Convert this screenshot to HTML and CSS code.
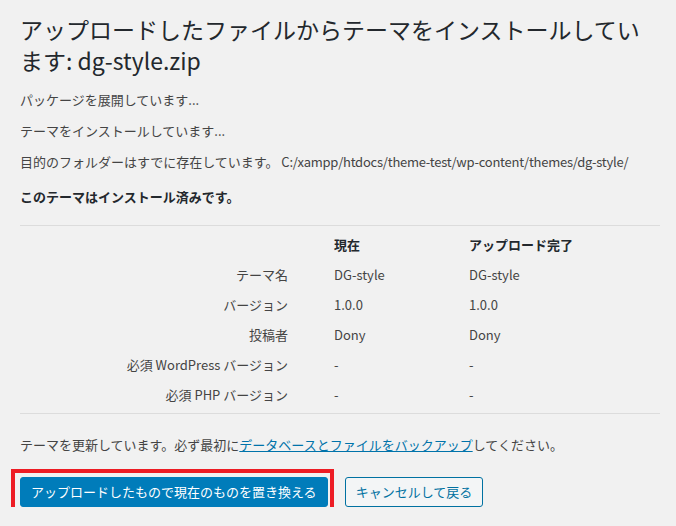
FILE: index.html
```html
<!DOCTYPE html>
<html lang="ja">
<head>
    <meta charset="utf-8">
    <title>テーマのインストール</title>
    <link rel="stylesheet" href="styles.css">
</head>
<body>
    <div class="wrap">
        <h1>アップロードしたファイルからテーマをインストールしています: dg-style.zip</h1>

        <p>パッケージを展開しています...</p>
        <p>テーマをインストールしています...</p>
        <p>目的のフォルダーはすでに存在しています。 <span class="path">C:/xampp/htdocs/theme-test/wp-content/themes/dg-style/</span></p>

        <h2 class="upload-heading">このテーマはインストール済みです。</h2>

        <div class="compare">
            <table class="compare-table">
                <thead>
                    <tr>
                        <th class="label"></th>
                        <th>現在</th>
                        <th>アップロード完了</th>
                    </tr>
                </thead>
                <tbody>
                    <tr>
                        <td class="label">テーマ名</td>
                        <td>DG-style</td>
                        <td>DG-style</td>
                    </tr>
                    <tr>
                        <td class="label">バージョン</td>
                        <td>1.0.0</td>
                        <td>1.0.0</td>
                    </tr>
                    <tr>
                        <td class="label">投稿者</td>
                        <td>Dony</td>
                        <td>Dony</td>
                    </tr>
                    <tr>
                        <td class="label">必須 WordPress バージョン</td>
                        <td>-</td>
                        <td>-</td>
                    </tr>
                    <tr>
                        <td class="label">必須 PHP バージョン</td>
                        <td>-</td>
                        <td>-</td>
                    </tr>
                </tbody>
            </table>
        </div>

        <p class="notice">テーマを更新しています。必ず最初に<a href="#">データベースとファイルをバックアップ</a>してください。</p>

        <div class="actions">
            <a href="#" class="button button-primary">アップロードしたもので現在のものを置き換える</a>
            <a href="#" class="button">キャンセルして戻る</a>
            <span class="highlight"></span>
        </div>
    </div>
</body>
</html>
```

FILE: styles.css
```css
body {
    margin: 0;
    background: #f1f1f1;
    color: #444;
    font-family: "Noto Sans CJK JP", "Noto Sans", sans-serif;
    font-size: 13px;
}

.wrap {
    padding: 14px 16px 0 20px;
}

h1 {
    margin: 0;
    padding-right: 10px;
    color: #23282d;
    font-size: 23px;
    font-weight: 400;
    line-height: 31px;
}

p {
    margin: 13px 0;
    line-height: 18px;
}

h1 + p {
    margin-top: 15px;
}

.path {
    letter-spacing: -0.25px;
}

.upload-heading {
    margin: 17px 0 19px;
    color: #23282d;
    font-size: 13px;
    font-weight: 700;
    line-height: 18px;
}

.compare {
    border-top: 1px solid #dcdcdc;
    border-bottom: 1px solid #dcdcdc;
    padding: 4px 0 3px;
}

.compare-table {
    width: 100%;
    border-collapse: collapse;
}

.compare-table th,
.compare-table td {
    height: 30px;
    padding: 0 0 0 24px;
    text-align: left;
    vertical-align: middle;
    line-height: 18px;
}

.compare-table th {
    color: #23282d;
    font-weight: 700;
}

.compare-table .label {
    width: 268px;
    padding: 0 22px 0 0;
    text-align: right;
}

.compare-table th:nth-child(2) {
    width: 111px;
}

p.notice {
    margin: 22px 0 23px;
}

a {
    color: #0073aa;
}

.actions {
    position: relative;
    display: flex;
    gap: 17px;
}

.button {
    display: inline-block;
    box-sizing: border-box;
    height: 30px;
    padding: 0 10px;
    border: 1px solid #0071a1;
    border-radius: 3px;
    background: #f3f5f6;
    color: #0071a1;
    font-size: 13px;
    line-height: 28px;
    text-decoration: none;
    white-space: nowrap;
}

.button-primary {
    border-color: #007cba;
    background: #007cba;
    color: #fff;
}

/* red annotation frame around the primary button */
.highlight {
    position: absolute;
    top: -8px;
    left: -9px;
    width: 323px;
    height: 47px;
    box-sizing: border-box;
    border: 4px solid #ed1c24;
}
```
